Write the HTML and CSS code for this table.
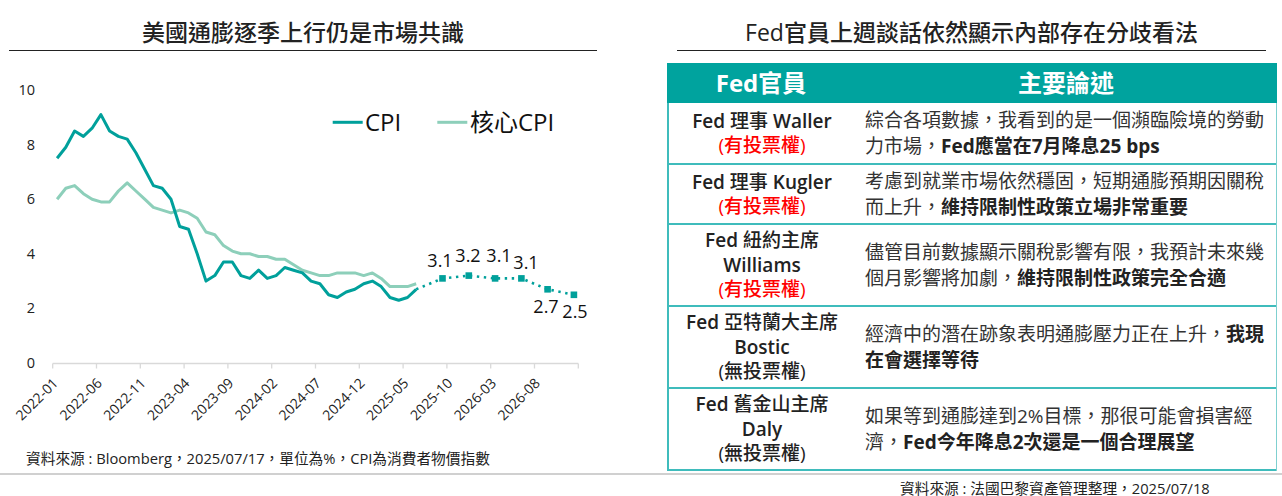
FILE: index.html
```html
<!DOCTYPE html>
<html lang="zh-Hant">
<head>
<meta charset="utf-8">
<title>CPI 與 Fed 官員看法</title>
<link rel="stylesheet" href="styles.css">
</head>
<body>
<div class="page">
  <div class="panels">
    <section class="panel panel-left">
      <h2 class="title title-left">美國通膨逐季上行仍是市場共識</h2>
      <svg class="chart" width="640" height="397" viewBox="0 51 640 397" xmlns="http://www.w3.org/2000/svg">
        <!-- y axis labels -->
        <g class="ylab">
          <text x="35" y="95">10</text>
          <text x="35" y="149.6">8</text>
          <text x="35" y="204.2">6</text>
          <text x="35" y="258.8">4</text>
          <text x="35" y="313.4">2</text>
          <text x="35" y="368">0</text>
        </g>
        <!-- x axis -->
        <g class="axis">
          <line x1="52.7" y1="363.5" x2="578.3" y2="363.5"/>
          <path d="M52.7 363.5V368.5M96.5 363.5V368.5M140.3 363.5V368.5M184.1 363.5V368.5M227.9 363.5V368.5M271.7 363.5V368.5M315.5 363.5V368.5M359.3 363.5V368.5M403.1 363.5V368.5M446.9 363.5V368.5M490.7 363.5V368.5M534.5 363.5V368.5M578.3 363.5V368.5"/>
        </g>
        <g class="xlab">
          <text x="59" y="384" transform="rotate(-45 59 384)">2022-01</text>
          <text x="102.9" y="384" transform="rotate(-45 102.9 384)">2022-06</text>
          <text x="146.7" y="384" transform="rotate(-45 146.7 384)">2022-11</text>
          <text x="190.5" y="384" transform="rotate(-45 190.5 384)">2023-04</text>
          <text x="234.3" y="384" transform="rotate(-45 234.3 384)">2023-09</text>
          <text x="278.1" y="384" transform="rotate(-45 278.1 384)">2024-02</text>
          <text x="321.9" y="384" transform="rotate(-45 321.9 384)">2024-07</text>
          <text x="365.7" y="384" transform="rotate(-45 365.7 384)">2024-12</text>
          <text x="409.5" y="384" transform="rotate(-45 409.5 384)">2025-05</text>
          <text x="453.3" y="384" transform="rotate(-45 453.3 384)">2025-10</text>
          <text x="497.1" y="384" transform="rotate(-45 497.1 384)">2026-03</text>
          <text x="540.9" y="384" transform="rotate(-45 540.9 384)">2026-08</text>
        </g>
        <!-- core CPI -->
        <polyline class="line-core" points="57.1,199.2 65.8,188.3 74.6,185.6 83.4,193.7 92.1,199.2 100.9,201.9 109.6,201.9 118.4,191 127.2,182.8 135.9,191 144.7,199.2 153.4,207.4 162.2,210.1 171,212.9 179.7,210.1 188.5,212.9 197.2,218.3 206,232 214.8,234.7 223.5,245.6 232.3,251.1 241,253.8 249.8,253.8 258.6,256.5 267.3,256.5 276.1,259.3 284.8,259.3 293.6,264.7 302.4,270.2 311.1,272.9 319.9,275.6 328.6,275.6 337.4,272.9 346.2,272.9 354.9,272.9 363.7,275.6 372.4,272.9 381.2,278.4 390,286.6 398.7,286.6 407.5,286.6 416.2,283.8"/>
        <!-- CPI -->
        <polyline class="line-cpi" points="57.1,158.3 65.8,147.3 74.6,131 83.4,136.4 92.1,128.2 100.9,114.6 109.6,131 118.4,136.4 127.2,139.1 135.9,152.8 144.7,169.2 153.4,185.6 162.2,188.3 171,199.2 179.7,226.5 188.5,229.2 197.2,253.8 206,281.1 214.8,275.6 223.5,262 232.3,262 241,275.6 249.8,278.4 258.6,270.2 267.3,278.4 276.1,275.6 284.8,267.5 293.6,270.2 302.4,272.9 311.1,281.1 319.9,283.8 328.6,294.8 337.4,297.5 346.2,292 354.9,289.3 363.7,283.8 372.4,281.1 381.2,286.6 390,297.5 398.7,300.2 407.5,297.5 416.2,289.3"/>
        <!-- forecast -->
        <polyline class="line-fc" points="416.2,289.3 442.5,278.4 468.8,275.6 495.1,278.4 521.4,278.4 547.6,289.3 573.9,294.8"/>
        <g class="marker">
          <rect x="439.2" y="275.1" width="6.6" height="6.6"/>
          <rect x="465.5" y="272.3" width="6.6" height="6.6"/>
          <rect x="491.8" y="275.1" width="6.6" height="6.6"/>
          <rect x="518.1" y="275.1" width="6.6" height="6.6"/>
          <rect x="544.3" y="286" width="6.6" height="6.6"/>
          <rect x="570.6" y="291.5" width="6.6" height="6.6"/>
        </g>
        <g class="dlab">
          <text x="440" y="266.5">3.1</text>
          <text x="468" y="261.5">3.2</text>
          <text x="499" y="261.5">3.1</text>
          <text x="526" y="268.5">3.1</text>
          <text x="546" y="312.5">2.7</text>
          <text x="575" y="317.5">2.5</text>
        </g>
        <!-- legend -->
        <line class="leg-cpi" x1="332.7" y1="122.3" x2="362.7" y2="122.3"/>
        <text class="leg" x="365" y="131">CPI</text>
        <line class="leg-core" x1="437.3" y1="122.3" x2="467.3" y2="122.3"/>
        <text class="leg" x="470" y="131">核心CPI</text>
      </svg>
      <p class="note note-left">資料來源 : Bloomberg，2025/07/17，單位為%，CPI為消費者物價指數</p>
    </section>

    <section class="panel panel-right">
      <h2 class="title title-right">Fed官員上週談話依然顯示內部存在分歧看法</h2>
      <div class="fed-table">
        <div class="thead">
          <div class="th th-name">Fed官員</div>
          <div class="th th-view">主要論述</div>
        </div>
        <div class="tbody">
          <div class="trow row-short">
            <div class="cell cell-name"><span class="lat">Fed</span> 理事 <span class="lat">Waller</span><br><span class="vote">(有投票權)</span></div>
            <div class="cell cell-view">綜合各項數據，我看到的是一個瀕臨險境的勞動<br>力市場，<b>Fed應當在7月降息25 bps</b></div>
          </div>
          <div class="trow row-short2">
            <div class="cell cell-name"><span class="lat">Fed</span> 理事 <span class="lat">Kugler</span><br><span class="vote">(有投票權)</span></div>
            <div class="cell cell-view">考慮到就業市場依然穩固，短期通膨預期因關稅<br>而上升，<b>維持限制性政策立場非常重要</b></div>
          </div>
          <div class="trow row-tall">
            <div class="cell cell-name"><span class="lat">Fed</span> 紐約主席<br><span class="lat">Williams</span><br><span class="vote">(有投票權)</span></div>
            <div class="cell cell-view">儘管目前數據顯示關稅影響有限，我預計未來幾<br>個月影響將加劇，<b>維持限制性政策完全合適</b></div>
          </div>
          <div class="trow row-tall">
            <div class="cell cell-name"><span class="lat">Fed</span> 亞特蘭大主席<br><span class="lat">Bostic</span><br>(無投票權)</div>
            <div class="cell cell-view">經濟中的潛在跡象表明通膨壓力正在上升，<b>我現<br>在會選擇等待</b></div>
          </div>
          <div class="trow row-tall">
            <div class="cell cell-name"><span class="lat">Fed</span> 舊金山主席<br><span class="lat">Daly</span><br>(無投票權)</div>
            <div class="cell cell-view">如果等到通膨達到2%目標，那很可能會損害經<br>濟，<b>Fed今年降息2次還是一個合理展望</b></div>
          </div>
        </div>
      </div>
    </section>
  </div>
  <div class="rule"></div>
  <p class="note note-right">資料來源 : 法國巴黎資產管理整理，2025/07/18</p>
</div>
</body>
</html>
```

FILE: styles.css
```css
html, body {
  margin: 0;
  padding: 0;
  background: #ffffff;
}

body {
  width: 1282px;
  height: 496px;
  overflow: hidden;
  font-family: "Open Sans", "Noto Sans CJK TC", sans-serif;
  color: #222222;
}

.page {
  width: 1282px;
  height: 496px;
}

.panels {
  display: grid;
  grid-template-columns: 640px 642px;
  height: 473px;
}

.panel {
  display: flex;
  flex-direction: column;
}

.title {
  margin: 0;
  box-sizing: border-box;
  height: 51px;
  padding-top: 19px;
  font-size: 23px;
  line-height: 26px;
  font-weight: 500;
  color: #222222;
  text-align: center;
  border-bottom: 1px solid #222222;
  white-space: nowrap;
}

.title-left {
  margin-left: 9px;
  width: 588px;
}

.title-right {
  margin-left: 37px;
  width: 589px;
}

.chart {
  display: block;
}

.ylab text {
  font-family: "Open Sans", sans-serif;
  font-size: 14.5px;
  fill: #222222;
  text-anchor: end;
}

.xlab text {
  font-family: "Open Sans", sans-serif;
  font-size: 14px;
  fill: #222222;
  text-anchor: end;
}

.axis line,
.axis path {
  stroke: #d9d9d9;
  stroke-width: 1.3;
  fill: none;
}

.line-cpi {
  fill: none;
  stroke: #00a09b;
  stroke-width: 3;
  stroke-linejoin: round;
}

.line-core {
  fill: none;
  stroke: #8dcfba;
  stroke-width: 3;
  stroke-linejoin: round;
}

.line-fc {
  fill: none;
  stroke: #00a09b;
  stroke-width: 2.6;
  stroke-dasharray: 2.4 4.6;
}

.marker rect {
  fill: #00a09b;
}

.dlab text {
  font-family: "Open Sans", sans-serif;
  font-size: 18px;
  fill: #111111;
  text-anchor: middle;
}

.leg-cpi {
  stroke: #00a09b;
  stroke-width: 3;
}

.leg-core {
  stroke: #8dcfba;
  stroke-width: 3;
}

.leg {
  font-family: "Open Sans", "Noto Sans CJK TC", sans-serif;
  font-size: 24px;
  fill: #111111;
}

.note {
  margin: 0;
  font-size: 14.7px;
  line-height: 20px;
  color: #222222;
  white-space: nowrap;
}

.note-left {
  padding-left: 26px;
}

.rule {
  height: 2px;
  background: #d0d0d0;
}

.note-right {
  margin-left: 900px;
  margin-top: 4px;
  line-height: 18px;
}

/* table */
.fed-table {
  margin-top: 12px;
  margin-left: 27px;
  width: 610px;
}

.thead {
  display: grid;
  grid-template-columns: 188px 422px;
  height: 40px;
  background: #00a39e;
}

.th {
  display: flex;
  align-items: center;
  justify-content: center;
  color: #ffffff;
  font-size: 24px;
  font-weight: 700;
  line-height: 28px;
}

.tbody {
  border-left: 2px solid #3fbcbc;
  border-right: 1px solid #7fd0d0;
}

.trow {
  display: grid;
  grid-template-columns: 186px 1fr;
  box-sizing: border-box;
  border-bottom: 2px solid #3fbcbc;
}

.row-short { height: 62px; }
.row-short2 { height: 60px; }
.row-tall { height: 82px; }

.cell {
  font-size: 19px;
  white-space: nowrap;
}

.cell-name {
  align-self: center;
  text-align: center;
  line-height: 24.5px;
  font-weight: 500;
  color: #222222;
}

.cell-name .lat {
  font-weight: 600;
}

.cell-view {
  align-self: center;
  padding-left: 10px;
  line-height: 26px;
  font-weight: 400;
  color: #333333;
}

.cell-view b {
  font-weight: 700;
  color: #222222;
}

.vote {
  color: #ff0000;
}
```
